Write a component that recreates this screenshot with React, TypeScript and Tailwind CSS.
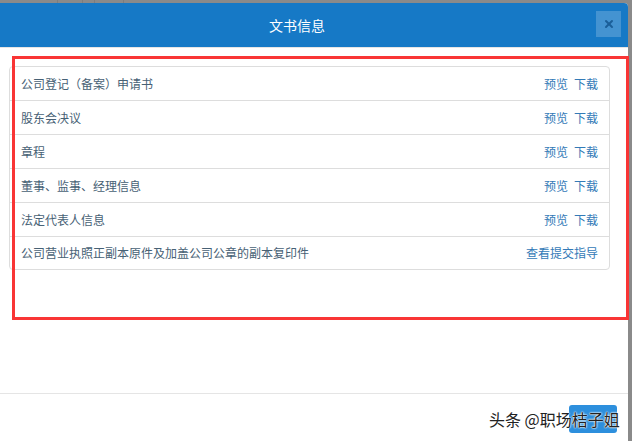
import { X } from "lucide-react";

interface DocItem {
  name: string;
  links: string[];
}

const docs: DocItem[] = [
  { name: "公司登记（备案）申请书", links: ["预览", "下载"] },
  { name: "股东会决议", links: ["预览", "下载"] },
  { name: "章程", links: ["预览", "下载"] },
  { name: "董事、监事、经理信息", links: ["预览", "下载"] },
  { name: "法定代表人信息", links: ["预览", "下载"] },
  { name: "公司营业执照正副本原件及加盖公司公章的副本复印件", links: ["查看提交指导"] },
];

const font = { fontFamily: '"Noto Sans CJK SC", "Noto Sans", sans-serif' };

export default function App() {
  return (
    <div
      className="relative flex h-[441px] w-[632px] flex-col overflow-hidden bg-[#8a8a8a]"
      style={font}
    >
      {/* backdrop strip */}
      <div className="flex h-[3px] shrink-0">
        <div className="w-[58px] border-r border-[#7d7d7d]" />
        <div className="w-[25px] border-r border-[#7d7d7d]" />
        <div className="w-[12px] border-r border-[#7d7d7d]" />
        <div className="w-[29px] border-r border-[#7d7d7d]" />
      </div>

      {/* modal */}
      <div className="flex w-[628px] flex-1 flex-col rounded-tr-[4px] bg-white">
        <div className="relative flex h-[45px] shrink-0 items-center justify-center rounded-tr-[4px] border-b border-[#e5e5e5] bg-[#1679c6] pr-[34px]">
          <span className="text-[14px] text-white">文书信息</span>
          <button className="absolute right-[7px] top-[8px] flex h-[26px] w-[25px] items-center justify-center bg-white/20 text-[#1b5f99]">
            <X className="h-[12px] w-[12px]" strokeWidth={4} />
          </button>
        </div>

        <div className="h-[345px] shrink-0 pl-[9px] pr-[18px] pt-[18px]">
          <ul className="overflow-hidden rounded-[4px] border border-[#dddddd]">
            {docs.map((doc, i) => (
              <li
                key={doc.name}
                className={
                  "flex items-center justify-between pl-[11px] pr-[11px] text-[12px] " +
                  (i > 0 ? "border-t border-[#dddddd] " : "") +
                  (i === 0 || i === docs.length - 1 ? "h-[33px]" : "h-[34px]")
                }
              >
                <span className="text-[#476175]">{doc.name}</span>
                <span className="flex gap-[6px] text-[#337ab7]">
                  {doc.links.map((l) => (
                    <a key={l}>{l}</a>
                  ))}
                </span>
              </li>
            ))}
          </ul>
        </div>

        <div className="flex flex-1 items-start justify-end border-t border-[#e5e5e5] pr-[11px] pt-[11px]">
          <button className="h-[28px] w-[48px] rounded-[3px] bg-[#2d8fdd]" />
        </div>
      </div>

      {/* annotation box */}
      <div className="pointer-events-none absolute left-[12px] top-[56px] h-[264px] w-[617px] border-[3px] border-[#f93535]" />

      {/* watermark */}
      <div
        className="pointer-events-none absolute left-[489px] top-[407px] text-[16px] text-[#222]"
        style={{ textShadow: "0 0 2px #fff, 0 0 2px #fff, 0 0 1px #fff" }}
      >
        头条 @职场桔子姐
      </div>
    </div>
  );
}
